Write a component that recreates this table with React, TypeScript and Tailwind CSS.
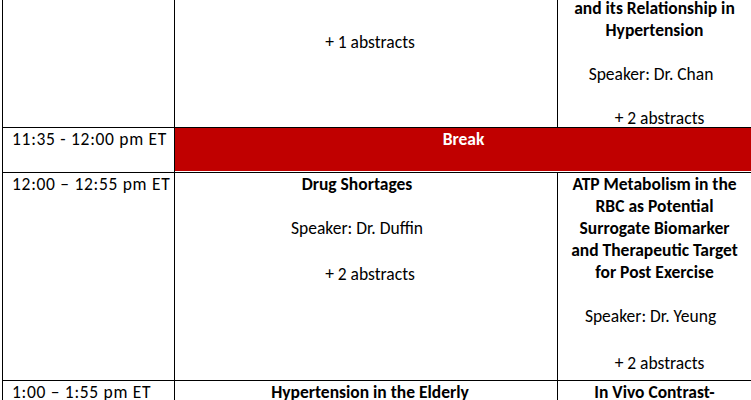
const font = { fontFamily: 'Carlito, Lato, "Liberation Sans", sans-serif' };

function Line({ children, bold, className = '' }: { children?: React.ReactNode; bold?: boolean; className?: string }) {
  return (
    <p className={`h-[22px] leading-[22px] whitespace-nowrap ${bold ? 'font-bold' : ''} ${className}`}>
      {children ?? '\u00a0'}
    </p>
  );
}

export default function App() {
  return (
    <div className="h-[400px] w-[751px] overflow-hidden bg-white text-black text-[17.5px]" style={font}>
      <div className="ml-[2px] w-[760px] border-l border-black">
        {/* row 1 (cut off at the top) */}
        <div className="flex h-[128px] border-b border-black">
          <div className="w-[172px] shrink-0 border-r border-black" />
          <div className="w-[383px] shrink-0 border-r border-black text-center pt-[31px]">
            <Line className="pl-[8px]">+ 1 abstracts</Line>
          </div>
          <div className="w-[193px] shrink-0 text-center">
            <Line bold className="!h-[19px] !leading-[17px]">and its Relationship in</Line>
            <Line bold>Hypertension</Line>
            <Line />
            <Line className="pr-[7px]">Speaker: Dr. Chan</Line>
            <Line />
            <Line className="pl-[10px]">+ 2 abstracts</Line>
          </div>
        </div>

        {/* break */}
        <div className="flex h-[45px] border-b border-black">
          <div className="w-[172px] shrink-0 border-r border-black pl-[9px]">
            <Line className="tracking-[0.7px]">11:35 - 12:00 pm ET</Line>
          </div>
          <div className="flex-1 pb-px">
            <div className="h-[43px] bg-[#c00000] text-white text-center pr-[10px]">
              <Line bold>Break</Line>
            </div>
          </div>
        </div>

        {/* 12:00 row */}
        <div className="flex h-[208px] border-b border-black">
          <div className="w-[172px] shrink-0 border-r border-black pl-[9px]">
            <Line className="tracking-[0.7px]">12:00 – 12:55 pm ET</Line>
          </div>
          <div className="w-[383px] shrink-0 border-r border-black text-center">
            <Line bold className="pr-[18px]">Drug Shortages</Line>
            <Line />
            <Line className="pr-[18px]">Speaker: Dr. Duffin</Line>
            <div className="h-[24px]" />
            <Line className="pl-[8px]">+ 2 abstracts</Line>
          </div>
          <div className="w-[193px] shrink-0 text-center">
            <Line bold>ATP Metabolism in the</Line>
            <Line bold>RBC as Potential</Line>
            <Line bold>Surrogate Biomarker</Line>
            <Line bold>and Therapeutic Target</Line>
            <Line bold>for Post Exercise</Line>
            <Line />
            <Line className="pr-[8px]">Speaker: Dr. Yeung</Line>
            <div className="h-[25px]" />
            <Line className="pl-[10px]">+ 2 abstracts</Line>
          </div>
        </div>

        {/* 1:00 row */}
        <div className="flex h-[60px]">
          <div className="w-[172px] shrink-0 border-r border-black pl-[9px]">
            <Line className="tracking-[0.7px]">1:00 – 1:55 pm ET</Line>
          </div>
          <div className="w-[383px] shrink-0 border-r border-black text-center">
            <Line bold className="pl-[8px]">Hypertension in the Elderly</Line>
          </div>
          <div className="w-[193px] shrink-0 text-center">
            <Line bold>In Vivo Contrast-</Line>
          </div>
        </div>
      </div>
    </div>
  );
}
